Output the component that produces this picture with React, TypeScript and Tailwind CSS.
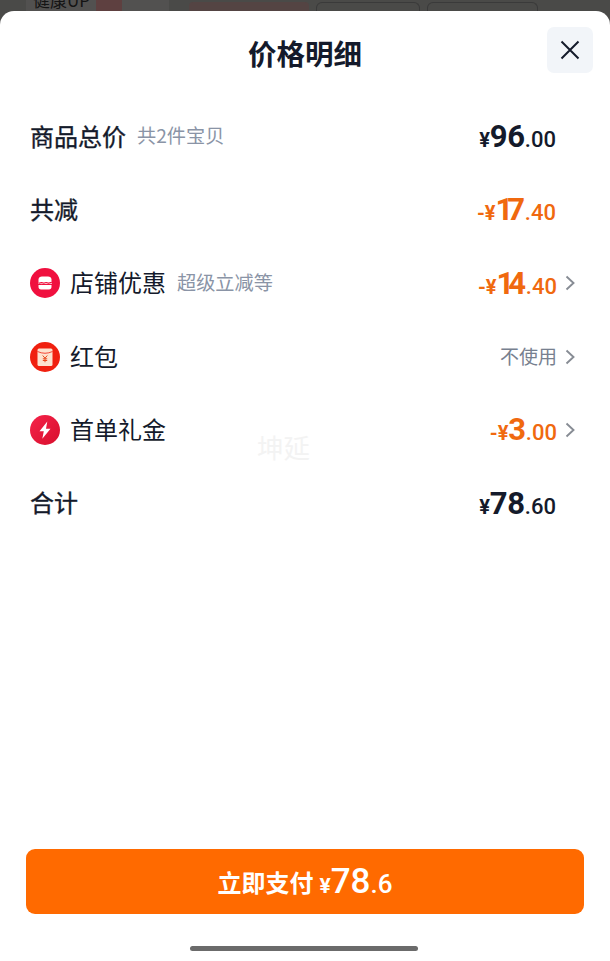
const cjk = "font-['Noto_Sans_CJK_SC','Noto_Sans',sans-serif]";

type Tone = "dark" | "orange";

function Amount({ prefix = "", whole, cents, tone }: { prefix?: string; whole: string; cents: string; tone: Tone }) {
  return (
    <span
      className={`flex items-baseline font-['Roboto',sans-serif] font-medium leading-none ${
        tone === "orange" ? "text-[#f0690f]" : "text-[#141a2b]"
      }`}
    >
      <span className="text-[20px] font-bold">{prefix}¥</span>
      <span className="text-[31px] font-bold">
        {/* the reference's 1 is much narrower than Roboto's tabular figure */}
        {whole.split("").map((digit, i) => (
          <span key={i} className={digit === "1" ? "tracking-[-6px]" : "tracking-[-0.3px]"}>
            {digit}
          </span>
        ))}
      </span>
      <span className="text-[22px]">.{cents}</span>
    </span>
  );
}

function Chevron() {
  return (
    <svg width="10" height="16" viewBox="0 0 10 16" fill="none" className="text-[#878c94]">
      <path d="M1.5 1.5 8.5 8l-7 6.5" stroke="currentColor" strokeWidth="1.9" />
    </svg>
  );
}

function StoreIcon() {
  return (
    <svg width="30" height="30" viewBox="0 0 30 30">
      <circle cx="15" cy="15" r="15" fill="#f0103f" />
      <path d="M8.500 14v-2.400C8.500 9.600 10 8.600 12 8.600h6c2 0 3.500 1 3.500 3V14z" fill="#fff" />
      <path d="M8 15.200q1.200-.8 2.333 0t2.333 0 2.333 0 2.333 0 2.333 0 2.333 0" stroke="#fff" strokeWidth="0.8" fill="none" />
      <path d="M8.500 17h13v2c0 1.500-1 2.500-2.500 2.500h-8C9.500 21.500 8.500 20.500 8.500 19z" fill="#fff" />
    </svg>
  );
}

function RedPacketIcon() {
  return (
    <svg width="30" height="30" viewBox="0 0 30 30">
      <circle cx="15" cy="15" r="15" fill="#f0200f" />
      <rect x="7.500" y="6.500" width="15" height="17.500" rx="1.500" fill="#fde2cf" />
      <path d="M7.500 9.500q7.500 3.500 15 0" stroke="#f0200f" strokeWidth="0.8" fill="none" />
      <path d="M12.700 13.500 15 16.200l2.300-2.700M12.800 16.800h4.400M12.800 18.500h4.400M15 16.200v4" stroke="#e8481c" strokeWidth="1" fill="none" />
    </svg>
  );
}

function BoltIcon() {
  return (
    <svg width="30" height="30" viewBox="0 0 30 30">
      <defs>
        <linearGradient id="bolt" x1="0" y1="0" x2="1" y2="1">
          <stop offset="0" stopColor="#f5234a" />
          <stop offset="1" stopColor="#d80f2c" />
        </linearGradient>
      </defs>
      <circle cx="15" cy="15" r="15" fill="url(#bolt)" />
      <path d="M17.300 6.500 9.500 16.200h4.300l-1.500 7.600 8.200-10h-4.500z" fill="#fff" />
    </svg>
  );
}

function Row({
  icon,
  label,
  note,
  chevron,
  strong,
  children,
}: {
  icon?: React.ReactNode;
  label: string;
  note?: string;
  chevron?: boolean;
  strong?: boolean;
  children: React.ReactNode;
}) {
  return (
    <div className="flex h-[73.3px] items-center pl-[30px] pr-[35px]">
      {icon && <span className="mr-[10px] flex">{icon}</span>}
      <span className={`mb-[2px] text-[24px] leading-none text-[#141a2b] ${strong ? "[-webkit-text-stroke:0.35px]" : ""}`}>
        {label}
      </span>
      {note && <span className="mb-[2px] ml-[11px] text-[19.2px] leading-none text-[#8a94a6]">{note}</span>}
      <span className="ml-auto">{children}</span>
      <span className={`flex justify-end ${chevron ? "w-[18px]" : "w-[19px]"}`}>{chevron && <Chevron />}</span>
    </div>
  );
}

export default function App() {
  return (
    <div className={`${cjk} flex h-[961px] w-[610px] flex-col overflow-hidden bg-[#4a4a48]`}>
      {/* Dimmed page behind the sheet */}
      <div className="flex h-[11px] shrink-0 items-end overflow-hidden pl-[26px]">
        <div className="flex h-[11px] w-[143px] overflow-hidden bg-[#525150]">
          <span className="ml-[7px] mt-[-10px] text-[17px] leading-[20px] text-[#141414]">健康UP</span>
          <span className="ml-[6px] h-[11px] w-[26px] bg-[#5e4040]" />
        </div>
        <div className="ml-[20px] h-[9px] w-[120px] rounded-t-[4px] bg-[#544443]" />
        <div className="ml-[7px] h-[9px] w-[104px] rounded-t-[6px] border border-b-0 border-[#3a3a3a]" />
        <div className="ml-[7px] h-[9px] w-[111px] rounded-t-[6px] border border-b-0 border-[#3a3a3a]" />
      </div>

      <div className="relative flex flex-1 flex-col rounded-t-[14px] bg-white">
        <header className="grid h-[89px] shrink-0 grid-cols-[1fr_auto_1fr] items-start">
          <span />
          <h1 className="mt-[24px] text-[28.5px] font-bold leading-[36px] text-[#141a2b]">价格明细</h1>
          <div className="flex justify-end pr-[17px] pt-[16px]">
            <button type="button" className="flex h-[46px] w-[46px] items-center justify-center rounded-[7px] bg-[#f2f5f9]">
              <svg width="20" height="20" viewBox="0 0 20 20" fill="none">
                <path d="M1.500 1.500l17 17M18.500 1.500l-17 17" stroke="#141a2b" strokeWidth="2" />
              </svg>
            </button>
          </div>
        </header>

        <Row label="商品总价" note="共2件宝贝" strong>
          <Amount whole="96" cents="00" tone="dark" />
        </Row>
        <Row label="共减" strong>
          <Amount prefix="-" whole="17" cents="40" tone="orange" />
        </Row>
        <Row icon={<StoreIcon />} label="店铺优惠" note="超级立减等" chevron>
          <Amount prefix="-" whole="14" cents="40" tone="orange" />
        </Row>
        <Row icon={<RedPacketIcon />} label="红包" chevron>
          <span className="text-[19px] leading-none text-[#77808f]">不使用</span>
        </Row>
        <Row icon={<BoltIcon />} label="首单礼金" chevron>
          <Amount prefix="-" whole="3" cents="00" tone="orange" />
        </Row>
        <Row label="合计" strong>
          <Amount whole="78" cents="60" tone="dark" />
        </Row>

        {/* Watermark */}
        <span className="absolute left-[257px] top-[419px] text-[26.5px] leading-[34px] text-[#f3f3f3]">坤延</span>

        <div className="mt-auto px-[26px]">
          <button
            type="button"
            className="flex h-[65px] w-full items-center justify-center rounded-[9px] bg-[#ff6a00] text-white"
          >
            <span className="text-[24px] font-bold leading-none">立即支付</span>
            <span className="ml-[6px] flex items-baseline font-['Roboto',sans-serif] font-medium leading-none">
              <span className="text-[21px] font-bold">¥</span>
              <span className="text-[35px]">78</span>
              <span className="text-[26px]">.6</span>
            </span>
          </button>
        </div>
        <div className="mb-[10px] ml-[-3px] mt-[32px] h-[5px] w-[228px] self-center rounded-full bg-[#6b6b6b]" />
      </div>
    </div>
  );
}
